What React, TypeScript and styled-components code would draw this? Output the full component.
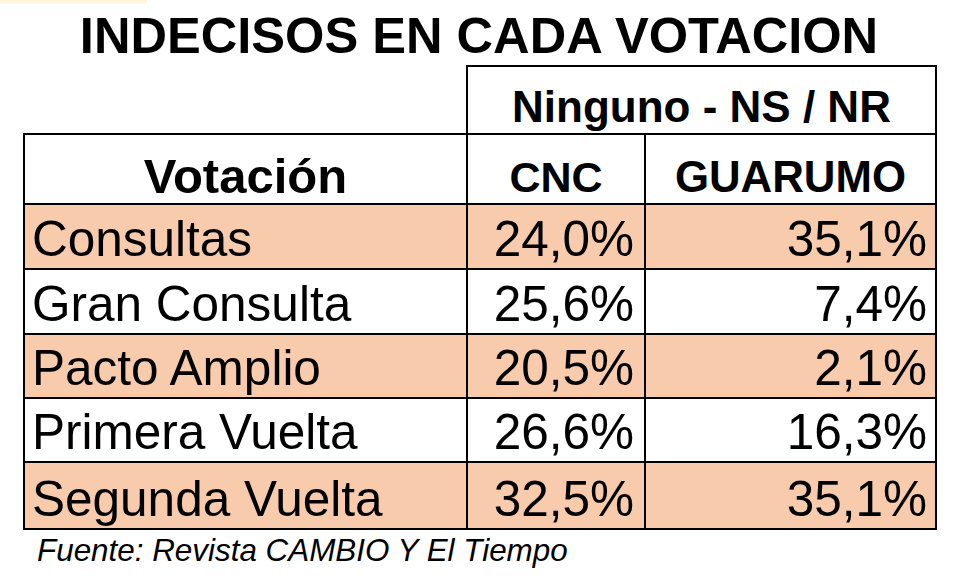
import React from "react";
import styled, { createGlobalStyle } from "styled-components";

const PEACH = "#F8CBAD";
const LINE = "#000";
const FONT = `"Liberation Sans", Arial, sans-serif`;

const GlobalStyle = createGlobalStyle`
  html, body {
    margin: 0;
    padding: 0;
    background: #fff;
  }
  body {
    font-family: ${FONT};
    color: #000;
  }
`;

const Page = styled.div`
  width: 964px;
  height: 588px;
  position: relative;
  overflow: hidden;
  background: #fff;
`;

// leftover cell highlight from the source sheet, top-left corner
const CornerStrip = styled.div`
  position: absolute;
  left: 0;
  top: 0;
  width: 147px;
  height: 4px;
  background: linear-gradient(to bottom, #fff1d2, #fffaf0);
`;

const Sheet = styled.div`
  padding: 11px 0 0 23px;
  width: 912px;
`;

const Title = styled.h1`
  margin: 0 0 4px;
  font: bold 50.6px/50px ${FONT};
  text-align: center;
  white-space: nowrap;
`;

const Table = styled.table`
  border-collapse: collapse;
  table-layout: fixed;
  width: 912px;
`;

const Row = styled.tr<{ $h: number; $shaded?: boolean }>`
  height: ${(p) => p.$h}px;
  background: ${(p) => (p.$shaded ? PEACH : "#fff")};
`;

const Blank = styled.td`
  border: none;
  background: #fff;
  padding: 0;
`;

const HeadCell = styled.th<{ $size: number; $pb: number }>`
  border: 2px solid ${LINE};
  padding: 0 0 ${(p) => p.$pb}px;
  font: bold ${(p) => p.$size}px/1 ${FONT};
  text-align: center;
  vertical-align: bottom;
  white-space: nowrap;
`;

const Cell = styled.td<{ $align?: "left" | "right"; $side?: number }>`
  border: 2px solid ${LINE};
  padding: 0;
  padding-bottom: 5px;
  padding-left: ${(p) => (p.$align === "right" ? 0 : p.$side ?? 7)}px;
  padding-right: ${(p) => (p.$align === "right" ? p.$side ?? 8 : 0)}px;
  font: 49.5px/1 ${FONT};
  text-align: ${(p) => p.$align ?? "left"};
  vertical-align: bottom;
  white-space: nowrap;
`;

const Source = styled.p`
  margin: 4px 0 0 14px;
  font: italic 31.4px/1.1 ${FONT};
  white-space: nowrap;
`;

type Item = { name: string; cnc: string; guarumo: string; h: number };

const rows: Item[] = [
  { name: "Consultas", cnc: "24,0%", guarumo: "35,1%", h: 65 },
  { name: "Gran Consulta", cnc: "25,6%", guarumo: "7,4%", h: 65 },
  { name: "Pacto Amplio", cnc: "20,5%", guarumo: "2,1%", h: 64 },
  { name: "Primera Vuelta", cnc: "26,6%", guarumo: "16,3%", h: 64 },
  { name: "Segunda Vuelta", cnc: "32,5%", guarumo: "35,1%", h: 67 },
];

export default function App() {
  return (
    <Page>
      <GlobalStyle />
      <CornerStrip />
      <Sheet>
        <Title>INDECISOS EN CADA VOTACION</Title>
        <Table>
          <colgroup>
            <col style={{ width: 443 }} />
            <col style={{ width: 178 }} />
            <col style={{ width: 291 }} />
          </colgroup>
          <thead>
            <Row $h={68}>
              <Blank />
              <HeadCell colSpan={2} $size={44} $pb={4}>
                Ninguno - NS / NR
              </HeadCell>
            </Row>
            <Row $h={70}>
              <HeadCell $size={49} $pb={2}>
                Votación
              </HeadCell>
              <HeadCell $size={43} $pb={4}>
                CNC
              </HeadCell>
              <HeadCell $size={43.8} $pb={4}>
                GUARUMO
              </HeadCell>
            </Row>
          </thead>
          <tbody>
            {rows.map((r, i) => (
              <Row key={r.name} $h={r.h} $shaded={i % 2 === 0}>
                <Cell>{r.name}</Cell>
                <Cell $align="right" $side={10}>
                  {r.cnc}
                </Cell>
                <Cell $align="right" $side={8}>
                  {r.guarumo}
                </Cell>
              </Row>
            ))}
          </tbody>
        </Table>
        <Source>Fuente: Revista CAMBIO Y El Tiempo</Source>
      </Sheet>
    </Page>
  );
}
